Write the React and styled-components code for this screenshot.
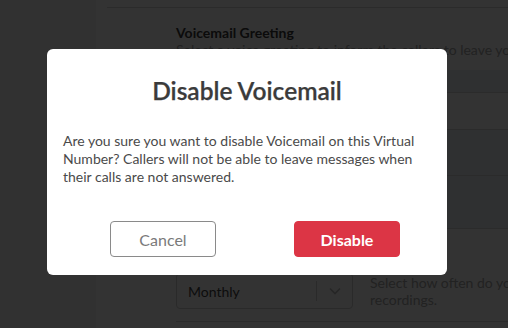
import React from "react";
import styled, { createGlobalStyle } from "styled-components";

const Global = createGlobalStyle`
  html, body { margin: 0; padding: 0; }
  body { font-family: Lato, "Open Sans", sans-serif; background: #fff; overflow: hidden; }
  * { box-sizing: border-box; }
`;

const Page = styled.div`
  display: flex;
  width: 508px;
  height: 328px;
  overflow: hidden;
  background: #fff;
`;

const Sidebar = styled.aside`
  width: 96px;
  flex: none;
  background: #f4f4f4;
`;

const Main = styled.main`
  flex: 1;
  min-width: 0;
  padding-left: 11px;
  display: flex;
  flex-direction: column;
`;

const TopBar = styled.div`
  height: 8px;
  border-bottom: 1px solid #d6d6d6;
`;

const Content = styled.div`
  padding: 16px 0 0 69px;
  display: flex;
  flex-direction: column;
`;

const SectionTitle = styled.div`
  font-size: 14px;
  line-height: 17px;
  font-weight: 700;
  color: #3a3a3a;
  white-space: nowrap;
`;

const SectionText = styled.div`
  font-size: 14px;
  line-height: 17px;
  color: #a8a8a8;
  white-space: nowrap;
`;

const OptionList = styled.div`
  margin-top: 12px;
  display: flex;
  flex-direction: column;
`;

const OptionRow = styled.div`
  height: ${(p) => p.$h}px;
  background: ${(p) => (p.$tint ? "#e9eef6" : "#fff")};
  border-bottom: ${(p) => (p.$line ? "1px solid #d8d8d8" : "none")};
`;

const SettingRow = styled.div`
  display: flex;
  align-items: flex-start;
  gap: 17px;
  padding-top: 44px;
  height: 93px;
  border-bottom: 1px solid #d8d8d8;
`;

const Select = styled.div`
  width: 177px;
  flex: none;
  height: 36px;
  border: 1px solid #cfcfcf;
  border-radius: 4px;
  display: flex;
  align-items: center;
  padding-left: 11px;
  font-size: 14px;
  color: #444;
`;

const SelectValue = styled.span`
  flex: 1;
`;

const SelectDivider = styled.span`
  width: 1px;
  height: 20px;
  background: #cfcfcf;
`;

const SelectArrow = styled.span`
  width: 35px;
  display: flex;
  justify-content: center;
  align-items: center;
  color: #bbb;
`;

const Hint = styled.div`
  font-size: 14px;
  line-height: 17px;
  color: #a8a8a8;
  white-space: nowrap;
  margin-top: 1px;
`;

const Overlay = styled.div`
  position: fixed;
  inset: 0;
  background: rgba(0, 0, 0, 0.8);
  display: flex;
  align-items: flex-start;
  justify-content: flex-start;
  padding: 49px 0 0 47px;
`;

const Modal = styled.div`
  width: 400px;
  height: 226px;
  background: #fff;
  border-radius: 6px;
  padding: 27px 16px 18px;
  display: flex;
  flex-direction: column;
`;

const ModalTitle = styled.h2`
  margin: 0;
  text-align: center;
  font-size: 24.5px;
  line-height: 29px;
  font-weight: 600;
  color: #3b3b3b;
  -webkit-text-stroke: 0.25px #3b3b3b;
`;

const ModalBody = styled.p`
  margin: 27px 0 0;
  font-size: 14px;
  line-height: 18px;
  color: #4a4a4a;
`;

const Actions = styled.div`
  margin-top: auto;
  display: flex;
  justify-content: space-around;
  padding: 0 31px 0 47px;
  gap: 78px;
`;

const Button = styled.button`
  width: 106px;
  height: 36px;
  border-radius: 4px;
  font-family: Lato, sans-serif;
  font-size: 16px;
  cursor: pointer;
  border: 1px solid ${(p) => (p.$primary ? "#dc3545" : "#8a8a8a")};
  background: ${(p) => (p.$primary ? "#dc3545" : "#fff")};
  color: ${(p) => (p.$primary ? "#fff" : "#7a7a7a")};
  font-weight: ${(p) => (p.$primary ? 700 : 400)};
`;

export default function App() {
  return (
    <>
      <Global />
      <Page>
        <Sidebar />
        <Main>
          <TopBar />
          <Content>
            <SectionTitle>Voicemail Greeting</SectionTitle>
            <SectionText>Select a voice greeting to inform the callers to leave you</SectionText>
            <OptionList>
              <OptionRow $h={23} $tint $line />
              <OptionRow $h={37} $line />
              <OptionRow $h={46} $tint $line />
              <OptionRow $h={53} $tint $line />
            </OptionList>
            <SettingRow>
              <Select>
                <SelectValue>Monthly</SelectValue>
                <SelectDivider />
                <SelectArrow>
                  <svg width="12" height="8" viewBox="0 0 12 8" fill="none">
                    <polyline points="1,1.5 6,6.5 11,1.5" stroke="currentColor" strokeWidth="1.6" />
                  </svg>
                </SelectArrow>
              </Select>
              <Hint>
                Select how often do you
                <br />
                recordings.
              </Hint>
            </SettingRow>
          </Content>
        </Main>
      </Page>
      <Overlay>
        <Modal>
          <ModalTitle>Disable Voicemail</ModalTitle>
          <ModalBody>
            Are you sure you want to disable Voicemail on this Virtual Number? Callers will not be
            able to leave messages when their calls are not answered.
          </ModalBody>
          <Actions>
            <Button>Cancel</Button>
            <Button $primary>Disable</Button>
          </Actions>
        </Modal>
      </Overlay>
    </>
  );
}
